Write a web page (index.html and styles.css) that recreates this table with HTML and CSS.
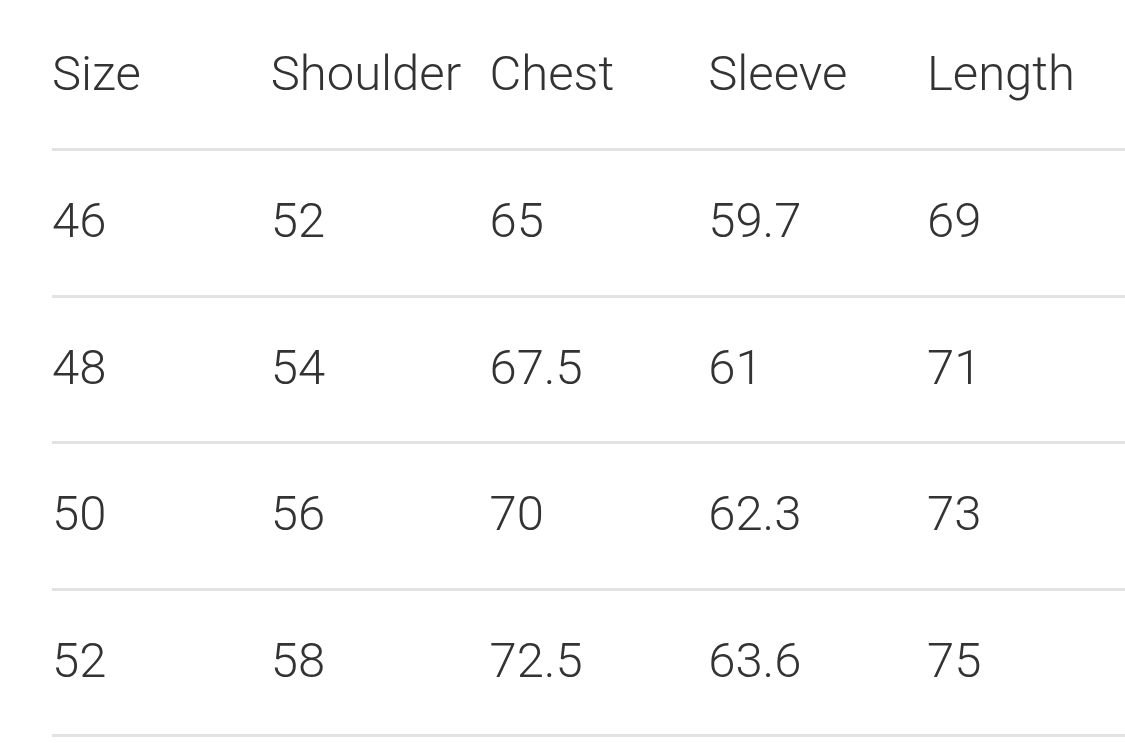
FILE: index.html
```
<!DOCTYPE html>
<html>
<head>
<meta charset="utf-8">
<link rel="stylesheet" href="styles.css">
</head>
<body>
<div class="chart">
  <div class="row head"><div>Size</div><div>Shoulder</div><div>Chest</div><div>Sleeve</div><div>Length</div></div>
  <div class="row"><div>46</div><div>52</div><div>65</div><div>59.7</div><div>69</div></div>
  <div class="row"><div>48</div><div>54</div><div>67.5</div><div>61</div><div>71</div></div>
  <div class="row"><div>50</div><div>56</div><div>70</div><div>62.3</div><div>73</div></div>
  <div class="row"><div>52</div><div>58</div><div>72.5</div><div>63.6</div><div>75</div></div>
</div>
</body>
</html>
```
FILE: styles.css
```
html, body {
  margin: 0;
  padding: 0;
  background: #fff;
  overflow: hidden;
}
.chart {
  padding-left: 52px;
  font-family: Roboto, "Liberation Sans", sans-serif;
  font-weight: 300;
  font-size: 49px;
  line-height: 59px;
  color: #333;
}
.row {
  display: grid;
  grid-template-columns: repeat(5, 218.75px);
  padding: 40px 0 44.5px;
  border-bottom: 3px solid #e2e2e2;
  white-space: nowrap;
}
.row.head {
  padding: 44px 0 45px;
}
```
